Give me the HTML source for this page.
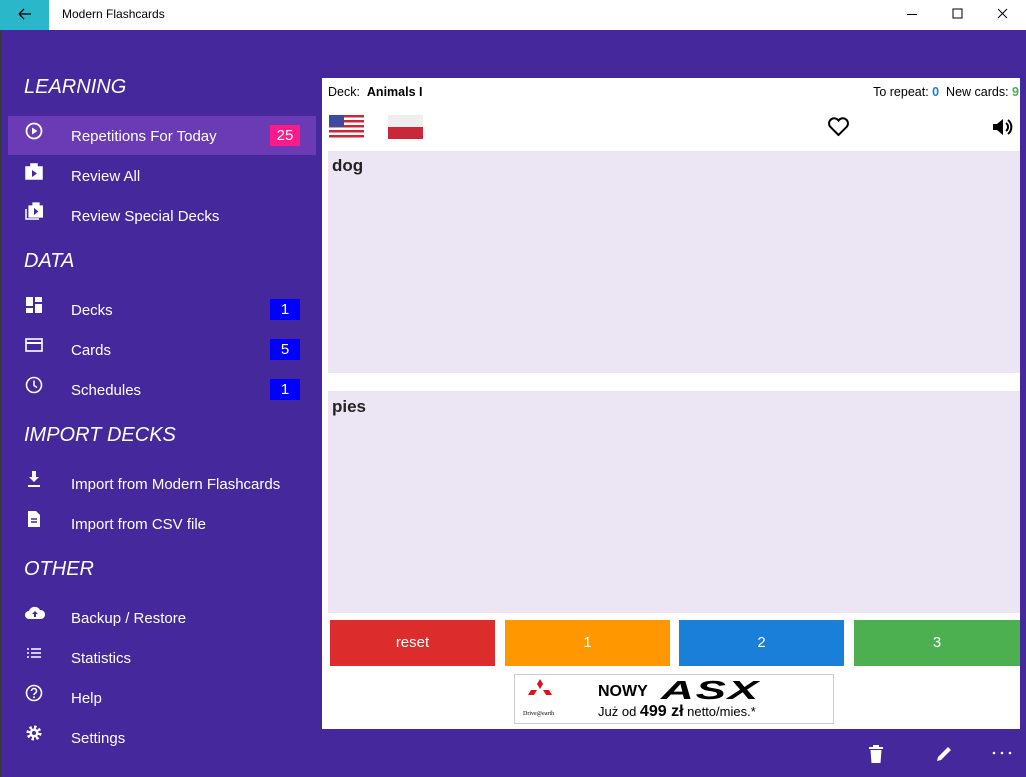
<!DOCTYPE html>
<html><head><meta charset="utf-8"><style>
*{margin:0;padding:0;box-sizing:border-box}
body{width:1026px;height:777px;overflow:hidden;font-family:"Liberation Sans",sans-serif;background:#45289c;position:relative}
.abs{position:absolute}
.title{left:0;top:0;width:1026px;height:30px;background:#fff}
.back{left:0;top:0;width:49px;height:30px;background:#2ab7ca}
.sec{left:24px;color:#fff;font-style:italic;font-size:20px}
.item{left:71px;color:#fff;font-size:15px}
.ic{left:25px;width:18px;height:18px}
.badge{left:270px;width:30px;height:21px;color:#fff;font-size:15px;text-align:center;line-height:21px}
.btn{top:620px;height:46px;color:#fff;font-size:15px;text-align:center;line-height:46px}
</style></head><body>
<div class="abs title"></div>
<div class="abs back"><svg width="49" height="30"><path d="M19 14h12M19 14l5-5M19 14l5 5" stroke="#000" stroke-width="1.3" fill="none"/></svg></div>
<div class="abs" style="left:62px;top:7px;font-size:12px;color:#000">Modern Flashcards</div>
<svg class="abs" style="left:890px;top:0" width="136" height="30"><path d="M17 14.5h10M63 9h9v9h-9zM108 9l9 9M117 9l-9 9" stroke="#000" stroke-width="1" fill="none"/></svg>
<div class="abs" style="left:0;top:30px;width:2px;height:747px;background:#3a3a3a"></div>

<div class="abs sec" style="top:76px">LEARNING</div>
<div class="abs" style="left:8px;top:116px;width:308px;height:39px;background:#6a3bb5"></div>
<svg class="abs ic" style="top:122px"><circle cx="9" cy="9" r="7.5" stroke="#fff" stroke-width="1.8" fill="none"/><path d="M7 5.5v7l5.5-3.5z" fill="#fff"/></svg>
<div class="abs item" style="top:128px">Repetitions For Today</div>
<div class="abs badge" style="top:125px;background:#ff1a8c">25</div>
<svg class="abs ic" style="top:162px"><path d="M1 5h16v12H1z M6 5V2h6v3" fill="#fff" stroke="#fff" stroke-width="1.5"/><path d="M7 8v7l5-3.5z" fill="#45289c"/></svg>
<div class="abs item" style="top:168px">Review All</div>
<svg class="abs ic" style="top:202px"><path d="M4 4h14v11H4z M8 4V1h6v3" fill="#fff" stroke="#fff" stroke-width="1.2"/><path d="M1 7v10h13" stroke="#fff" stroke-width="1.5" fill="none"/><path d="M9 6v7l4.5-3.5z" fill="#45289c"/></svg>
<div class="abs item" style="top:208px">Review Special Decks</div>

<div class="abs sec" style="top:250px">DATA</div>
<svg class="abs ic" style="top:296px"><path d="M1 1h7v9H1zM10 1h7v5h-7zM1 12h7v5H1zM10 8h7v9h-7z" fill="#fff"/></svg>
<div class="abs item" style="top:302px">Decks</div>
<div class="abs badge" style="top:299px;background:#0000ff">1</div>
<svg class="abs ic" style="top:336px"><rect x="1" y="3" width="16" height="12" stroke="#fff" stroke-width="1.6" fill="none"/><path d="M1 7h16" stroke="#fff" stroke-width="2"/></svg>
<div class="abs item" style="top:342px">Cards</div>
<div class="abs badge" style="top:339px;background:#0000ff">5</div>
<svg class="abs ic" style="top:376px"><circle cx="9" cy="9" r="7.5" stroke="#fff" stroke-width="1.6" fill="none"/><path d="M9 4.5v5l3 2" stroke="#fff" stroke-width="1.5" fill="none"/></svg>
<div class="abs item" style="top:382px">Schedules</div>
<div class="abs badge" style="top:379px;background:#0000ff">1</div>

<div class="abs sec" style="top:424px">IMPORT DECKS</div>
<svg class="abs ic" style="top:470px"><path d="M7 1h4v6h3l-5 5-5-5h3z M3 15h12v2H3z" fill="#fff"/></svg>
<div class="abs item" style="top:476px">Import from Modern Flashcards</div>
<svg class="abs ic" style="top:510px"><path d="M3 1h8l4 4v12H3z" fill="#fff"/><path d="M6 9h6M6 12h6" stroke="#45289c" stroke-width="1.4"/></svg>
<div class="abs item" style="top:516px">Import from CSV file</div>

<div class="abs sec" style="top:558px">OTHER</div>
<svg class="abs ic" style="top:604px;width:20px"><path d="M4 15a4 4 0 0 1 0-8 6 6 0 0 1 11-1 4.5 4.5 0 0 1 1 9z" fill="#fff"/><path d="M10 7l-3 3h2v3h2v-3h2z" fill="#45289c"/></svg>
<div class="abs item" style="top:610px">Backup / Restore</div>
<svg class="abs ic" style="top:644px"><path d="M2 5h2M6 5h10M2 9h2M6 9h10M2 13h2M6 13h10" stroke="#fff" stroke-width="1.6"/></svg>
<div class="abs item" style="top:650px">Statistics</div>
<svg class="abs ic" style="top:684px"><circle cx="9" cy="9" r="7.5" stroke="#fff" stroke-width="1.6" fill="none"/><path d="M6.5 7a2.5 2.5 0 1 1 3.5 2.3c-.8.4-1 1-1 1.8" stroke="#fff" stroke-width="1.5" fill="none"/><circle cx="9" cy="13.3" r="1" fill="#fff"/></svg>
<div class="abs item" style="top:690px">Help</div>
<svg class="abs ic" style="top:724px"><circle cx="9" cy="9" r="5.5" stroke="#fff" stroke-width="4" stroke-dasharray="2.2 2.1" fill="none"/><circle cx="9" cy="9" r="4.5" fill="#fff"/><circle cx="9" cy="9" r="2" fill="#45289c"/></svg>
<div class="abs item" style="top:730px">Settings</div>

<div class="abs" style="left:322px;top:78px;width:698px;height:651px;background:#fff"></div>
<div class="abs" style="left:328px;top:85px;font-size:12.5px">Deck:&nbsp; <b>Animals I</b></div>
<div class="abs" style="right:7px;top:85px;font-size:12.5px">To repeat: <b style="color:#1a7fd8">0</b>&nbsp; New cards: <b style="color:#4caf50">9</b></div>
<svg class="abs" style="left:329px;top:115px" width="35" height="24"><rect width="35" height="24" fill="#fff"/><g fill="#c8283a"><rect y="0" width="35" height="2.5"/><rect y="5" width="35" height="2.5"/><rect y="10" width="35" height="2.5"/><rect y="15" width="35" height="2.5"/><rect y="20" width="35" height="2.5"/></g><rect width="15" height="12" fill="#3a4aa0"/></svg>
<svg class="abs" style="left:388px;top:115px" width="35" height="24"><rect width="35" height="12" fill="#eee"/><rect y="12" width="35" height="12" fill="#c8283a"/></svg>
<svg class="abs" style="left:827px;top:116px" width="23" height="21"><path d="M11.5 19L3 10.5a5 5 0 0 1 8.5-6 5 5 0 0 1 8.5 6z" stroke="#000" stroke-width="2" fill="none"/></svg>
<svg class="abs" style="left:991px;top:116px" width="24" height="22"><path d="M2 8h4l6-5v16l-6-5H2z" fill="#000"/><path d="M15 7a5 5 0 0 1 0 8M17 4a9 9 0 0 1 0 14" stroke="#000" stroke-width="2" fill="none"/></svg>
<div class="abs" style="left:328px;top:151px;width:692px;height:222px;background:#ece6f4"></div>
<div class="abs" style="left:332px;top:156px;font-size:17px;font-weight:bold;color:#222">dog</div>
<div class="abs" style="left:328px;top:391px;width:692px;height:222px;background:#ece6f4"></div>
<div class="abs" style="left:332px;top:397px;font-size:17px;font-weight:bold;color:#222">pies</div>
<div class="abs btn" style="left:330px;width:165px;background:#dd2c2c">reset</div>
<div class="abs btn" style="left:505px;width:165px;background:#ff9800">1</div>
<div class="abs btn" style="left:679px;width:165px;background:#1a7fd8">2</div>
<div class="abs btn" style="left:854px;width:166px;background:#4caf50">3</div>
<div class="abs" style="left:514px;top:674px;width:320px;height:50px;border:1px solid #ccc;background:#fff">
<svg class="abs" style="left:12px;top:4px" width="26" height="24"><path d="M13 0l3 5-3 5-3-5zM10 11l-3 5H1l3-5zM16 11l3 5h6l-3-5z" fill="#e01020"/></svg>
<div class="abs" style="left:8px;top:36px;font-size:6px;font-family:'Liberation Serif',serif">Drive@earth</div>
<div class="abs" style="left:83px;top:8px;font-size:16px;font-weight:bold">NOWY</div>
<div class="abs" style="left:146px;top:0px;font-size:26px;font-weight:900;font-style:italic;letter-spacing:1px;transform:scaleX(1.75);transform-origin:left">ASX</div>
<div class="abs" style="left:83px;top:28px;font-size:13px">Już od <b style="font-size:16px">499 zł</b> netto/mies.*</div>
</div>
<svg class="abs" style="left:867px;top:744px" width="18" height="20"><path d="M2 3h14v2H2zM6 1h6v2H6zM3.5 6h11l-1 13h-9z" fill="#fff"/></svg>
<svg class="abs" style="left:934px;top:744px" width="20" height="20"><path d="M3 17l1-4L14 3l3 3L7 16z" fill="#fff"/></svg>
<svg class="abs" style="left:991px;top:750px" width="22" height="6"><circle cx="3" cy="3" r="1.3" fill="#fff"/><circle cx="11" cy="3" r="1.3" fill="#fff"/><circle cx="19" cy="3" r="1.3" fill="#fff"/></svg>
</body></html>
